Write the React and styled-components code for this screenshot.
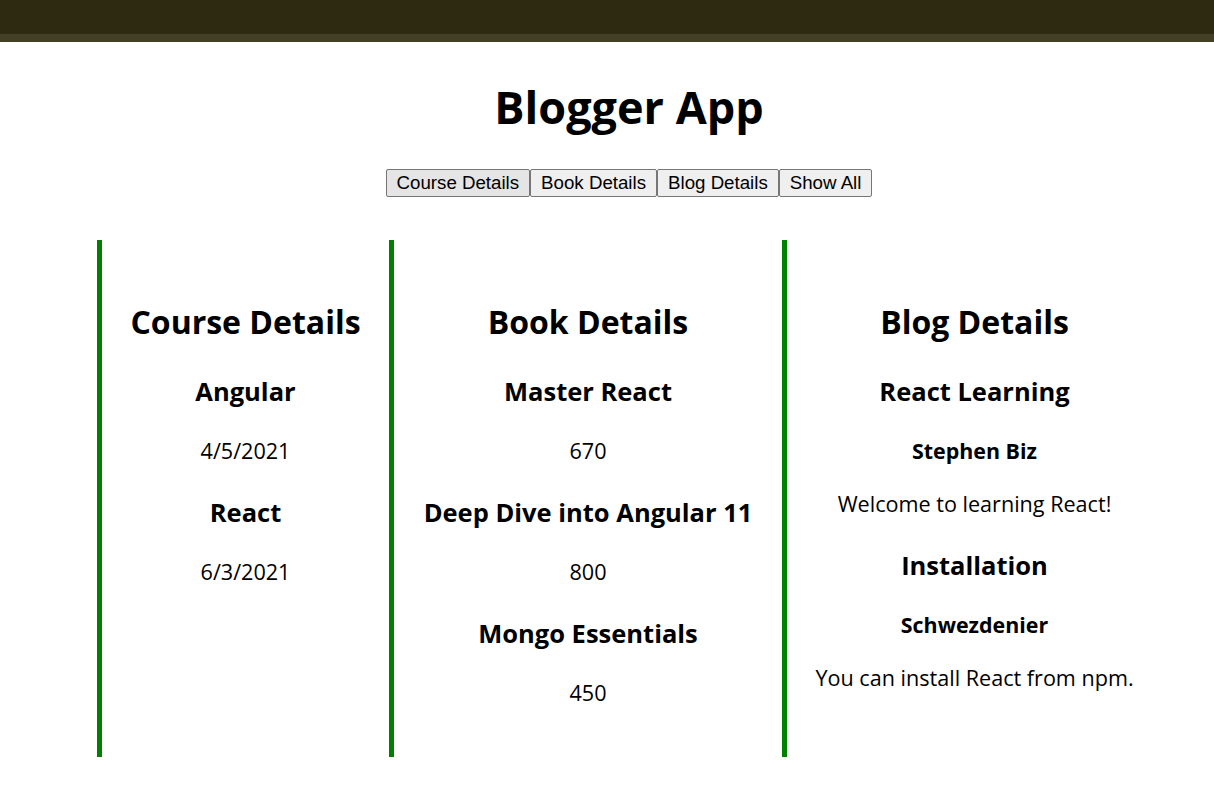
import React from "react";
import styled, { createGlobalStyle } from "styled-components";

const GlobalStyle = createGlobalStyle`
  body {
    margin: 0;
    background: #fff;
    font-family: "Open Sans", "Noto Sans", sans-serif;
    color: #000;
  }
`;

const TopBar = styled.div`
  height: 34px;
  background-color: #2e2911;
  border-bottom: 8px solid #423f24;
`;

const Main = styled.main`
  padding-left: 44px;
`;

const Title = styled.h1`
  margin: 38px 0 0;
  font-size: 45px;
  line-height: 53px;
  font-weight: 700;
  text-align: center;
`;

const Toolbar = styled.div`
  display: flex;
  justify-content: center;
  margin-top: 36px;
`;

const Btn = styled.button`
  font-family: "Liberation Sans", Arial, sans-serif;
  font-size: 18.7px;
  line-height: 22px;
  height: 28px;
  padding: 2px 10px;
  color: #000;
  border: 1px solid #767676;
  border-radius: 2px;
  background-color: ${(p) => (p.active ? "#e5e5e5" : "#efefef")};
  cursor: pointer;
`;

const Columns = styled.div`
  display: flex;
  align-items: stretch;
  margin-top: 43px;
  padding-left: 97px;
`;

const Column = styled.div`
  flex: 0 0 ${(p) => p.w}px;
  box-sizing: border-box;
  display: flex;
  flex-direction: column;
  align-items: center;
  padding: 60px 10px 50px;
  border-left: 5px solid #008000;
  text-align: center;
`;

const ColTitle = styled.h2`
  margin: 0;
  font-size: 32px;
  line-height: 44px;
  font-weight: 700;
  white-space: nowrap;
`;

const ItemTitle = styled.h3`
  margin: 32px 0 0;
  font-size: 25.5px;
  line-height: 31px;
  font-weight: 700;
  white-space: nowrap;
`;

const Author = styled.h4`
  margin: 33px 0 -2px;
  font-size: 21.4px;
  line-height: 22px;
  font-weight: 700;
`;

const Text = styled.p`
  margin: 29px 0 0;
  font-size: 21.6px;
  line-height: 29px;
  white-space: nowrap;
`;

const courses = [
  { id: 1, name: "Angular", date: "4/5/2021" },
  { id: 2, name: "React", date: "6/3/2021" },
];

const books = [
  { id: 101, bname: "Master React", price: 670 },
  { id: 102, bname: "Deep Dive into Angular 11", price: 800 },
  { id: 103, bname: "Mongo Essentials", price: 450 },
];

const blogs = [
  {
    id: 1,
    title: "React Learning",
    author: "Stephen Biz",
    body: "Welcome to learning React!",
  },
  {
    id: 2,
    title: "Installation",
    author: "Schwezdenier",
    body: "You can install React from npm.",
  },
];

const App = () => {
  return (
    <>
      <GlobalStyle />
      <TopBar />
      <Main>
        <Title>Blogger App</Title>
        <Toolbar>
          <Btn active>Course Details</Btn>
          <Btn>Book Details</Btn>
          <Btn>Blog Details</Btn>
          <Btn>Show All</Btn>
        </Toolbar>
      </Main>
      <Columns>
        <Column w={292}>
          <ColTitle>Course Details</ColTitle>
          {courses.map((c) => (
            <React.Fragment key={c.id}>
              <ItemTitle>{c.name}</ItemTitle>
              <Text>{c.date}</Text>
            </React.Fragment>
          ))}
        </Column>
        <Column w={393}>
          <ColTitle>Book Details</ColTitle>
          {books.map((b) => (
            <React.Fragment key={b.id}>
              <ItemTitle>{b.bname}</ItemTitle>
              <Text>{b.price}</Text>
            </React.Fragment>
          ))}
        </Column>
        <Column w={380}>
          <ColTitle>Blog Details</ColTitle>
          {blogs.map((b) => (
            <React.Fragment key={b.id}>
              <ItemTitle>{b.title}</ItemTitle>
              <Author>{b.author}</Author>
              <Text>{b.body}</Text>
            </React.Fragment>
          ))}
        </Column>
      </Columns>
    </>
  );
};

export default App;
